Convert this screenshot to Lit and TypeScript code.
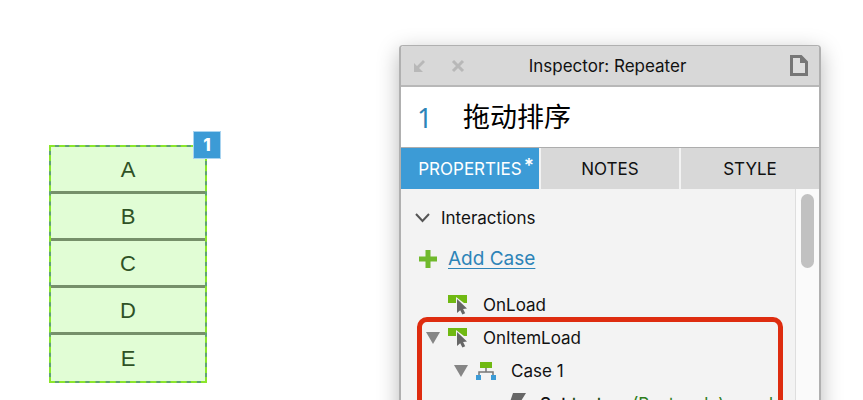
import { LitElement, html, css } from "lit";
import { customElement } from "lit/decorators.js";

const eventIcon = html`<svg class="event-icon" width="20" height="20" viewBox="0 0 20 20" aria-hidden="true">
  <path d="M0 0h19v8h-3L8 2v6H0z" fill="#70b913" />
  <path d="M9 4v14l3.2-2.8 2.2 4.2 2.8-1.2-2.1-4.2 3.9-.4z" fill="#666" />
</svg>`;

@customElement("item-repeater")
class ItemRepeater extends LitElement {
  static styles = css`
    :host {
      display: block;
      position: relative;
      width: 158px;
    }
    .list {
      box-sizing: border-box;
      margin: 0;
      padding: 0;
      list-style: none;
      display: grid;
      grid-template-rows: repeat(4, 47px) 46px;
      border: 2px dashed #8be62b;
      background: linear-gradient(#e1fdd5, #e1fdd5) padding-box, linear-gradient(#60a276, #60a276) border-box;
    }
    .item {
      display: flex;
      align-items: center;
      justify-content: center;
      padding-top: 2px;
      color: #2f5226;
      font: 22px/24px "Liberation Sans", Arial, sans-serif;
      border-bottom: 3px solid #76906a;
    }
    .item:last-child {
      border-bottom: 0;
    }
    .badge {
      position: absolute;
      top: -14px;
      right: -14px;
      box-sizing: border-box;
      width: 28px;
      height: 28px;
      display: grid;
      place-items: center;
      border: 1px solid #a9d4f0;
      background: #3c9bd6;
      color: #fff;
      font: 800 17px/20px Inter, "Noto Sans", sans-serif;
    }
  `;
  render() {
    return html`<ul class="list">
        ${["A", "B", "C", "D", "E"].map((n) => html`<li class="item">${n}</li>`)}
      </ul>
      <span class="badge">1</span>`;
  }
}

@customElement("inspector-panel")
class InspectorPanel extends LitElement {
  static styles = css`
    :host {
      box-sizing: border-box;
      display: flex;
      flex-direction: column;
      border: solid #b0b0b0;
      border-width: 1px 2px 0;
      border-radius: 4px 4px 0 0;
      background: #f3f3f3;
      color: #111;
      box-shadow: 0 6px 22px rgba(0, 0, 0, 0.28);
      font: 17px/24px Inter, "Noto Sans", "Noto Sans CJK SC", sans-serif;
    }
    button {
      margin: 0;
      padding: 0;
      border: 0;
      background: none;
      color: inherit;
      font: inherit;
    }
    svg {
      display: block;
      flex: none;
    }
    .title-bar {
      box-sizing: border-box;
      height: 41px;
      display: grid;
      grid-template-columns: 1fr auto 1fr;
      align-items: center;
      padding: 0 11px 0 6px;
      border-bottom: 2px solid #b8b8b8;
      border-radius: 3px 3px 0 0;
      background: #d8d8d8;
    }
    .title {
      margin: 0;
      font: inherit;
    }
    .window-tools {
      display: flex;
      gap: 20px;
      padding-left: 6px;
    }
    .notes {
      justify-self: end;
    }
    .name-row {
      box-sizing: border-box;
      height: 60px;
      display: flex;
      align-items: center;
      padding: 2px 16px 0;
      background: #fff;
      color: #000;
      font-size: 27px;
      line-height: 36px;
    }
    .index {
      width: 46px;
      color: #2d84b8;
      font-family: "Noto Sans", sans-serif;
    }
    .tabs {
      box-sizing: border-box;
      height: 42px;
      display: grid;
      grid-template-columns: repeat(3, 1fr);
      gap: 2px;
      border-top: 1px solid #adadad;
      background: #f3f3f3;
    }
    .tab {
      background: #d8d8d8;
    }
    .tab.active {
      position: relative;
      background: #3c9bd6;
      color: #fff;
    }
    .star {
      position: absolute;
      top: 6px;
      right: 5px;
      font-size: 19px;
      font-weight: 600;
    }
    .body {
      flex: 1;
      display: flex;
      min-height: 0;
    }
    .tree {
      flex: 1;
      position: relative;
      padding: 12px 12px 0 14px;
      overflow: hidden;
    }
    .track {
      flex: none;
      box-sizing: border-box;
      width: 24px;
      padding: 5px 5px 0;
      border-left: 1px solid #dedede;
      background: #fafafa;
    }
    .thumb {
      width: 13px;
      height: 74px;
      border-radius: 7px;
      background: #c1c1c1;
    }
    .section {
      display: flex;
      align-items: center;
      gap: 11px;
      height: 34px;
    }
    .add {
      display: flex;
      align-items: center;
      gap: 11px;
      height: 48px;
      margin-bottom: 5px;
      padding-left: 4px;
      font-size: 19px;
    }
    .link {
      color: #2d84b8;
      text-decoration-thickness: 1px;
      text-underline-offset: 3px;
    }
    .row {
      display: flex;
      align-items: center;
      height: 33px;
      white-space: nowrap;
    }
    .event {
      padding-left: 33px;
      gap: 15px;
    }
    .open {
      padding-left: 11px;
      gap: 8px;
    }
    .open .label {
      margin-left: 7px;
    }
    .case {
      padding-left: 39px;
      gap: 8px;
    }
    .case .label {
      margin-left: 7px;
    }
    .action {
      padding-left: 94px;
      gap: 14px;
    }
    .verb {
      font-weight: 500;
    }
    .detail {
      color: #234d1a;
      font-weight: 500;
    }
    .target {
      color: #2e7d1a;
    }
    .highlight {
      position: absolute;
      top: 128px;
      right: 12px;
      bottom: -20px;
      left: 16px;
      border: 5px solid #de2c0f;
      border-radius: 10px;
      pointer-events: none;
    }
  `;
  render() {
    const triangle = html`<svg width="14" height="12" viewBox="0 0 14 12" aria-hidden="true"><path d="M0 0h14L7 12z" fill="#858585" /></svg>`;
    return html`
      <header class="title-bar">
        <div class="window-tools">
          <button aria-label="Dock">
            <svg width="18" height="16" viewBox="0 0 18 16"><path d="M1 5l3 3 6-6 2 2-6 6 4 4H1z" fill="#b8b8b8" /></svg>
          </button>
          <button aria-label="Close">
            <svg width="14" height="16" viewBox="0 0 14 16"><path d="m2 3 10 10M12 3 2 13" fill="none" stroke="#b8b8b8" stroke-width="3" /></svg>
          </button>
        </div>
        <h1 class="title">Inspector: Repeater</h1>
        <button class="notes" aria-label="Page notes">
          <svg width="18" height="21" viewBox="0 0 18 21"><path d="M1.5 1.5H11L16.5 7v12.5h-15z" fill="#dedede" stroke="#777" stroke-width="3" /><path d="M10 1v7h7z" fill="#777" /></svg>
        </button>
      </header>
      <div class="name-row"><span class="index">1</span><span>拖动排序</span></div>
      <nav class="tabs">
        <button class="tab active">PROPERTIES<span class="star">*</span></button>
        <button class="tab">NOTES</button>
        <button class="tab">STYLE</button>
      </nav>
      <div class="body">
        <div class="tree">
          <div class="section">
            <svg width="15" height="12" viewBox="0 0 15 12" aria-hidden="true"><path d="m1 2 6.5 7L14 2" fill="none" stroke="#555" stroke-width="2" /></svg>
            <span>Interactions</span>
          </div>
          <div class="add">
            <svg width="18" height="18" viewBox="0 0 18 18" aria-hidden="true"><path d="M0 9h18M9 0v18" stroke="#70b92c" stroke-width="5" /></svg>
            <a class="link" href="#">Add Case</a>
          </div>
          <div class="row event">${eventIcon}<span class="label">OnLoad</span></div>
          <div class="row open">${triangle}${eventIcon}<span class="label">OnItemLoad</span></div>
          <div class="row case">
            ${triangle}
            <svg width="20" height="18" viewBox="0 0 20 18" aria-hidden="true"><path d="M4 0h12v6H4z" fill="#70b913" /><path d="M10 6v4M3 14v-4h14v4" fill="none" stroke="#777" stroke-width="1.5" /><path d="M0 13h5v5H0zM15 13h5v5h-5z" fill="#3c9bd6" /></svg>
            <span class="label">Case 1</span>
          </div>
          <div class="row action">
            <svg width="17" height="22" viewBox="0 0 17 22" aria-hidden="true"><path d="M4 0h13l-5 8h4L3 22l3-10H0z" fill="#666" /></svg>
            <span><span class="verb">Set</span> <span class="detail">text on</span> <span class="target">(Rectangle) equal</span></span>
          </div>
          <div class="highlight"></div>
        </div>
        <div class="track"><div class="thumb"></div></div>
      </div>
    `;
  }
}

@customElement("app-root")
class AppRoot extends LitElement {
  static styles = css`
    :host {
      box-sizing: border-box;
      display: grid;
      grid-template-columns: 158px minmax(0, 422px);
      justify-content: space-between;
      height: 100vh;
      padding: 45px 42px 0 49px;
      overflow: hidden;
      background: #fff;
    }
    .repeater {
      margin-top: 100px;
    }
  `;
  render() {
    return html`<item-repeater class="repeater"></item-repeater><inspector-panel></inspector-panel>`;
  }
}
